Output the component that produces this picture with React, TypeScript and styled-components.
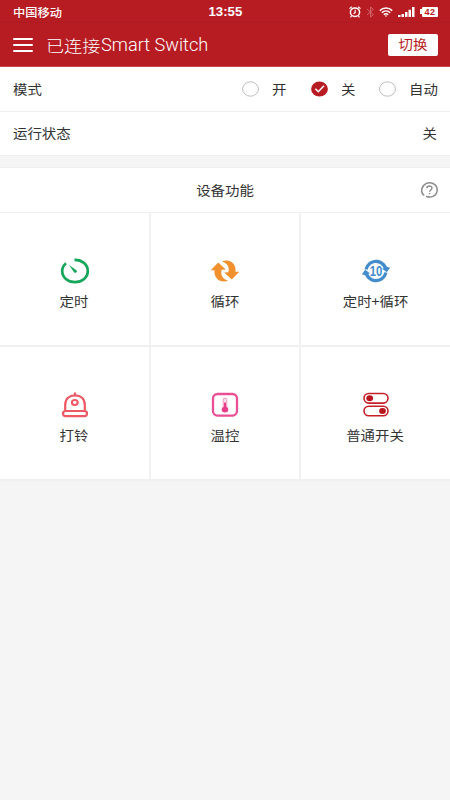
import React from "react";
import styled, { createGlobalStyle } from "styled-components";

const RED = "#b71c23";

const GlobalStyle = createGlobalStyle`
  * { box-sizing: border-box; }
  html, body { margin: 0; padding: 0; }
  body {
    background: #f5f5f5;
    font-family: "Liberation Sans", "Noto Sans CJK SC", sans-serif;
    color: #333;
  }
  svg { display: block; flex: none; overflow: visible; }
`;

const Screen = styled.main`
  width: 450px;
  height: 800px;
  background: #f5f5f5;
  overflow: hidden;
`;

const StatusBar = styled.div`
  height: 22px;
  display: grid;
  grid-template-columns: 1fr auto 1fr;
  align-items: center;
  padding: 1px 12px 0 13px;
  background: ${RED};
  color: #fff;
`;

const StatusIcons = styled.div`
  display: flex;
  justify-content: flex-end;
  align-items: center;
`;

const Wide = styled.span<{
  $size?: number;
  $origin?: "left" | "center" | "right";
  $weight?: number;
  $stretch?: number;
}>`
  display: inline-block;
  white-space: nowrap;
  font-family: "Noto Sans CJK SC", sans-serif;
  font-size: ${(p) => p.$size ?? 13}px;
  font-weight: ${(p) => p.$weight ?? 400};
  line-height: 20px;
  transform: scaleX(${(p) => p.$stretch ?? 1.11});
  transform-origin: ${(p) => p.$origin ?? "left"} center;
`;

const Clock = styled(Wide)`
  font-family: "Liberation Sans", sans-serif;
`;

const Latin = styled(Wide)`
  font-family: Roboto, sans-serif;
  margin-left: 7px;
`;

const Header = styled.header`
  height: 45px;
  display: flex;
  align-items: center;
  padding: 0 12px 0 13px;
  background: ${RED};
  border-top: 1px solid #ae1b22;
  border-bottom: 1px solid #c9464c;
  color: #fff;
`;

const MenuButton = styled.button`
  display: flex;
  flex-direction: column;
  gap: 4px;
  width: 20px;
  margin: 0 13px 0 0;
  padding: 0;
  border: 0;
  background: none;
`;

const MenuLine = styled.span`
  height: 2px;
  border-radius: 1px;
  background: #fff;
`;

const Title = styled.h1`
  display: flex;
  margin: 0;
  flex: 1;
`;

const SwitchButton = styled.button`
  width: 50px;
  height: 22px;
  display: flex;
  align-items: center;
  justify-content: center;
  padding: 0 0 1px;
  border: 0;
  border-radius: 2px;
  background: #fff;
  color: ${RED};
`;

const Row = styled.div<{ $height?: number }>`
  height: ${(p) => p.$height ?? 45}px;
  display: flex;
  align-items: center;
  justify-content: space-between;
  padding: 0 13px 1px;
  background: #fff;
  border-bottom: 1px solid #efefef;
`;

const Options = styled.div`
  display: grid;
  grid-template-columns: 68.5px 68.5px 57px;
  margin-right: 1px;
`;

const Option = styled.div`
  display: flex;
  align-items: center;
  gap: 13px;
`;

const SectionHead = styled.div`
  height: 46px;
  margin-top: 11px;
  display: grid;
  grid-template-columns: 1fr auto 1fr;
  align-items: center;
  padding: 0 12px 1px;
  background: #fff;
  border-top: 1px solid #efefef;
  border-bottom: 1px solid #efefef;
`;

const Help = styled.div`
  grid-column: 3;
  justify-self: end;
`;

const Heading = styled.h2`
  grid-column: 2;
  margin: 0;
  display: flex;
`;

const Grid = styled.div`
  display: grid;
  grid-template-columns: 151px 150px 149px;
  grid-template-rows: 134px 134px;
`;

const Tile = styled.div<{ $last?: boolean }>`
  display: flex;
  flex-direction: column;
  align-items: center;
  padding-top: 45px;
  gap: 7px;
  background: #fff;
  border-right: ${(p) => (p.$last ? 0 : 2)}px solid #f1f1f1;
  border-bottom: 2px solid #f0f0f0;
`;

const Radio = ({ on = false }: { on?: boolean }) => (
  <svg width="17" height="16" viewBox="0 0 17 16" fill="none">
    <ellipse cx="8.5" cy="8" rx={on ? 8.4 : 7.9} ry={on ? 7.6 : 7.2} fill={on ? RED : "#fff"} stroke={on ? "none" : "#bdbdbd"} />
    {on && <path d="M4.4 7.8 7.3 10.7 13 4.8" stroke="#fff" strokeWidth="1.6" />}
  </svg>
);

const AlarmIcon = () => (
  <svg width="12" height="12" viewBox="0 0 12 12" fill="none" stroke="#fff" strokeWidth="1.5">
    <ellipse cx="6" cy="6.2" rx="4.6" ry="4.3" />
    <path d="M6.2 3.8v2.6L4.6 7.8M.5 2.6 2.8.8M11.5 2.6 9.2.8M2.6 10 1.5 11.4M9.4 10l1.1 1.4" strokeWidth="1.2" />
  </svg>
);

const BluetoothIcon = () => (
  <svg width="9" height="12" viewBox="0 0 9 12" fill="none" stroke="#d0666b" strokeWidth="1">
    <path d="M1 3.2 7.5 8.6 4.5 11V1L7.5 3.4 1 8.8" />
  </svg>
);

const WifiIcon = () => (
  <svg width="14" height="10" viewBox="0 0 14 10" fill="none" stroke="#fff" strokeWidth="1.5">
    <path d="M.8 3.6C4.3.2 9.7.2 13.2 3.6M2.8 5.8c2.4-2.3 6-2.3 8.4 0M4.8 7.8c1.3-1.2 3.1-1.2 4.4 0" />
    <path d="M5.7 8.4 7 9.9l1.3-1.5Z" fill="#fff" stroke="none" />
  </svg>
);

const SignalIcon = () => (
  <svg width="17" height="10" viewBox="0 0 17 10" fill="#fff">
    <path d="M0 8h2.5v2H0zM3.500 7H6v3H3.500zM7 5h2.500v5H7zM10.500 2.800H13V10h-2.500zM14 0h2.500v10H14z" />
  </svg>
);

const Battery = styled.div`
  display: flex;
  align-items: center;
  margin-left: 5px;
  &::before {
    content: "";
    width: 2px;
    height: 5px;
    background: #fff;
  }
`;

const BatteryBody = styled.div`
  width: 16px;
  height: 10px;
  border-radius: 1px;
  background: #fff;
  color: ${RED};
  font: bold 9px/10px "Liberation Sans", sans-serif;
  letter-spacing: 0.5px;
  text-align: center;
`;

const IconGap = styled.span<{ $w: number }>`
  width: ${(p) => p.$w}px;
`;

const HelpIcon = () => (
  <svg width="17" height="16" viewBox="0 0 17 16" fill="none" stroke="#8c8c8c">
    <path d="M3.2 13.5C-.9 10.3.2 4 5 1.6 10-.9 16.2 2.4 16.2 8c0 5.500-6.100 8.500-11 6.300" strokeWidth="1.5" />
    <path d="M5.900 6.200C6 3.300 11 3.300 11 6.100c0 1.900-2.500 1.900-2.500 3.700M8.500 10.900v1.300" strokeWidth="1.4" />
  </svg>
);

const TimerIcon = () => (
  <svg width="30" height="26" viewBox="0 0 30 26" fill="none">
    <path d="M14.500 1.800C22 1.600 27.800 6.400 27.800 13c0 6.300-5.600 11.200-12.800 11.200S2.200 19.300 2.200 13c0-3.100 1.300-5.700 3.800-7.800" stroke="#16a65a" strokeWidth="2.700" />
    <path d="M8.800 6.800 16.700 12.500a1.600 1.600 0 0 1-2.500 1.900Z" fill="#16a65a" />
  </svg>
);

const CycleIcon = () => (
  <svg width="30" height="26" viewBox="0 0 30 26" fill="#f0912d">
    <path d="M12 3.500C19.200.5 26.500 5.400 25.500 13.800h3.800l-7.500 7.700-7.600-6.900 4.200-.3c1.200-5.300-.8-9-6.400-10.800Z" />
    <path d="M18 22.700C10.800 25.500 3.500 20.600 4.500 12.300H.7l7.500-7.700 7.600 6.900-4.200.3c-1.200 5.300.8 9 6.400 10.900Z" />
  </svg>
);

const TimedCycleIcon = () => (
  <svg width="30" height="26" viewBox="0 0 30 26" fill="#438dcd">
    <path d="M3.500 11.200C5 5.400 9.600 1.700 15 1.700c4.900 0 8.900 2.700 10.900 7l3.200 1-3.300 4.500-4.800-3.500 1.700-.4C21.400 7.200 18.600 5 15 5c-4 0-7.200 2.700-8.300 6.700Z" />
    <path d="M26.500 14.800C25 20.600 20.400 24.300 15 24.300c-4.900 0-8.900-2.700-10.900-7l-3.200-1 3.300-4.500L9 15.300l-1.700.4C8.600 18.800 11.400 21 15 21c4 0 7.200-2.700 8.300-6.700Z" />
    <text x="15" y="17.800" textAnchor="middle" fontFamily="Liberation Sans, sans-serif" fontWeight="700" fontSize="14" textLength="12.500" lengthAdjust="spacingAndGlyphs">10</text>
  </svg>
);

const BellIcon = () => (
  <svg width="30" height="26" viewBox="0 0 30 26" fill="none" stroke="#ed5964" strokeWidth="2.200">
    <path d="M5.200 18.500V13C5.200 6.500 9.300 3.400 15 3.400S24.800 6.500 24.800 13v5.500" />
    <path d="M15 3V1.400" strokeLinecap="round" />
    <rect x="3" y="19" width="24" height="5.200" rx="2.600" />
    <ellipse cx="14.800" cy="10.500" rx="2.900" ry="2.500" strokeWidth="2.100" />
  </svg>
);

const ThermometerIcon = () => (
  <svg width="30" height="26" viewBox="0 0 30 26">
    <rect x="3" y="2" width="24" height="21.600" rx="4.500" fill="none" stroke="#e94f94" strokeWidth="2.300" />
    <rect x="13.200" y="6" width="3.600" height="11" rx="1.800" fill="#fbe4ee" stroke="#ee83b2" strokeWidth=".8" />
    <path d="M15 10.500V17" stroke="#e83e89" strokeWidth="2" />
    <ellipse cx="15" cy="17.600" rx="3.300" ry="2.900" fill="#e83e89" />
  </svg>
);

const TogglesIcon = () => (
  <svg width="30" height="26" viewBox="0 0 30 26" fill="none" stroke="#c32028" strokeWidth="1.600">
    <rect x="3" y="1.500" width="24" height="9.600" rx="4.800" />
    <rect x="3" y="14.200" width="24" height="9.600" rx="4.800" />
    <ellipse cx="8.700" cy="6.300" rx="3.400" ry="3" fill="#b9151e" stroke="none" />
    <ellipse cx="21.500" cy="19" rx="3.400" ry="3" fill="#b9151e" stroke="none" />
  </svg>
);

const features = [
  { label: "定时", Icon: TimerIcon },
  { label: "循环", Icon: CycleIcon },
  { label: "定时+循环", Icon: TimedCycleIcon },
  { label: "打铃", Icon: BellIcon },
  { label: "温控", Icon: ThermometerIcon },
  { label: "普通开关", Icon: TogglesIcon },
];

const modes = [
  { label: "开", on: false },
  { label: "关", on: true },
  { label: "自动", on: false },
];

export default function App() {
  return (
    <Screen>
      <GlobalStyle />
      <StatusBar>
        <Wide $size={11} $weight={500}>中国移动</Wide>
        <Clock $size={12} $weight={700} $origin="center" $stretch={1.1}>13:55</Clock>
        <StatusIcons>
          <AlarmIcon />
          <IconGap $w={5} />
          <BluetoothIcon />
          <IconGap $w={4} />
          <WifiIcon />
          <IconGap $w={5} />
          <SignalIcon />
          <Battery><BatteryBody>42</BatteryBody></Battery>
        </StatusIcons>
      </StatusBar>
      <Header>
        <MenuButton aria-label="菜单">
          <MenuLine /><MenuLine /><MenuLine />
        </MenuButton>
        <Title>
          <Wide $size={16} $weight={300} $stretch={1.13}>已连接</Wide>
          <Latin $size={18} $weight={300} $stretch={1.01}>Smart Switch</Latin>
        </Title>
        <SwitchButton><Wide $origin="center">切换</Wide></SwitchButton>
      </Header>
      <Row>
        <Wide>模式</Wide>
        <Options>
          {modes.map((m) => (
            <Option key={m.label}>
              <Radio on={m.on} />
              <Wide>{m.label}</Wide>
            </Option>
          ))}
        </Options>
      </Row>
      <Row $height={44}>
        <Wide>运行状态</Wide>
        <Wide $origin="right">关</Wide>
      </Row>
      <SectionHead>
        <Heading><Wide $origin="center">设备功能</Wide></Heading>
        <Help><HelpIcon /></Help>
      </SectionHead>
      <Grid>
        {features.map(({ label, Icon }, i) => (
          <Tile key={label} $last={i % 3 === 2}>
            <Icon />
            <Wide $origin="center">{label}</Wide>
          </Tile>
        ))}
      </Grid>
    </Screen>
  );
}
